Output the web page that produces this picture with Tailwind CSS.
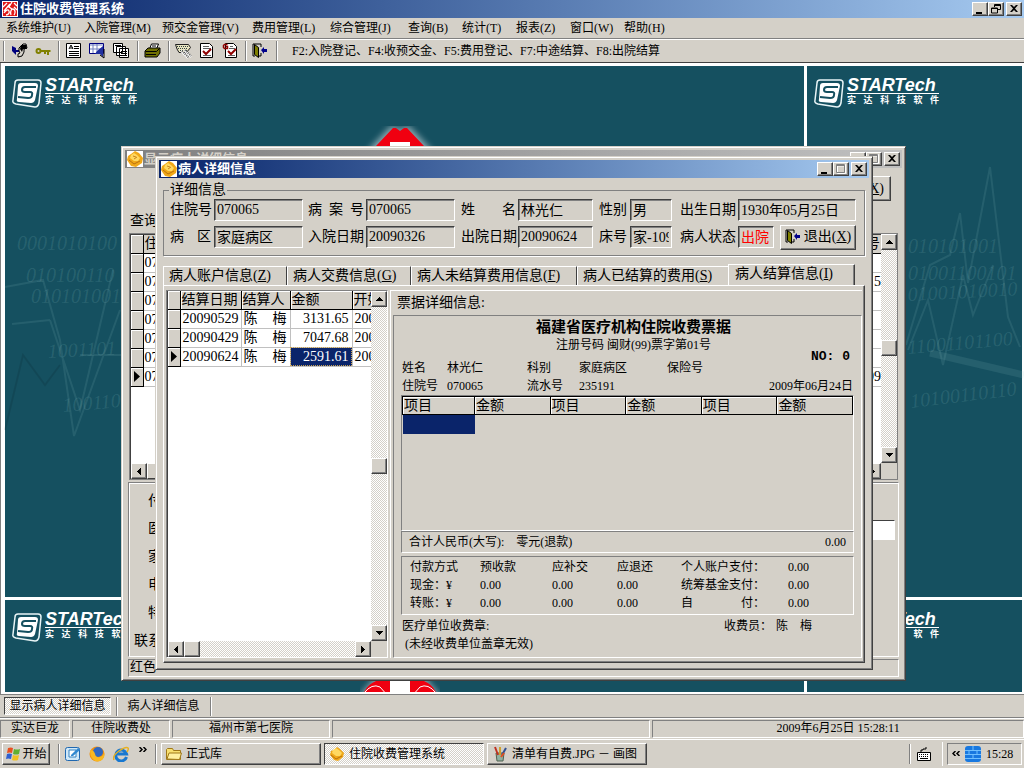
<!DOCTYPE html>
<html lang="zh-CN">
<head>
  <meta charset="UTF-8" />
  <meta name="viewport" content="width=device-width, initial-scale=1.0" />
  <title>住院收费管理系统</title>
  <script src="https://cdn.jsdelivr.net/npm/@tailwindcss/browser@4"></script>
</head>
<body class="h-screen flex flex-col overflow-hidden bg-[#d4d0c8] text-black text-[12px] leading-[16px] whitespace-nowrap font-['Liberation_Serif','Noto_Sans_CJK_SC',sans-serif]">

  <!-- Общие символы -->
  <svg class="hidden">
    <symbol id="i-up" viewBox="0 0 7 4"><path d="M3 0h1v1h1v1h1v1h1v1H0V3h1V2h1V1h1z" /></symbol>
    <symbol id="i-down" viewBox="0 0 7 4"><path d="M0 0h7v1H6v1H5v1H4v1H3V3H2V2H1V1H0z" /></symbol>
    <symbol id="i-left" viewBox="0 0 4 7"><path d="M4 0v7H3V6H2V5H1V4H0V3h1V2h1V1h1V0z" /></symbol>
    <symbol id="i-right" viewBox="0 0 4 7"><path d="M0 0h1v1h1v1h1v1h1v1H3v1H2v1H1v1H0z" /></symbol>
    <symbol id="i-min" viewBox="0 0 12 10"><path d="M2 8h6v2H2z" /></symbol>
    <symbol id="i-max" viewBox="0 0 12 10"><path d="M2.500 1v8.500h8V.5h-8M2 2h9" fill="none" stroke="#fff" /><path d="M1.500 .5h8v8h-8zM1 1.500h9" fill="none" stroke="#808080" /></symbol>
    <symbol id="i-close" viewBox="0 0 12 10"><path d="M2 1h2l2 2 2-2h2L7 4.500 10 8H8L6 6 4 8H2l3-3.500z" /></symbol>
    <symbol id="i-restore" viewBox="0 0 12 10"><path d="M4.500 3V.5h6v5H8M4 1.500h7M1.500 4h6v5h-6zM1 4.500h7" fill="none" stroke="#000" /></symbol>
    <symbol id="i-win" viewBox="0 0 16 16">
      <path d="M0 0h16v16H0z" fill="#fff" />
      <path d="M8 0l4 2 4 5-1 5-6 4-5-1-4-6 1-4 3-2z" fill="#f0a818" />
      <path d="M7 2l3 2 3 3-2 3-4 0-4-3 1-3z" fill="#ffd860" />
      <path d="M2 9l5 4 6-3" fill="none" stroke="#b87010" /><path d="M6 5l3 1M7 8l3-2" stroke="#c88420" />
    </symbol>
    <symbol id="i-door" viewBox="0 0 16 16">
      <path d="M1 13V1h8v3M9 10v3H7M1 13h2" fill="none" stroke="#000" />
      <path d="M2.500 1.500l4 3v10l-4-3z" fill="#808000" stroke="#000" />
      <path d="M9 7l3-3v2h3v3h-3v2z" fill="#00008b" />
    </symbol>
    <symbol id="i-s" viewBox="0 0 32 30">
      <path d="M7 2h20q3 0 3 3l-2 20q-1 4-4 4L5 26q-4-1-3-4L4 5q0-3 3-3z" fill="none" stroke="#e8f4f6" stroke-width="1.500" />
      <path d="M10 5h14q3 0 3 3l-3 14q-1 3-4 3L8 24q-3 0-2-3L7 8q0-3 3-3z" fill="#fff" />
      <path d="M25 9H14q-3 0-3 3 0 2 3 2h5q3 0 2 3 0 3-4 3l-10-1" fill="none" stroke="#155060" stroke-width="2" />
    </symbol>
    <symbol id="i-cross" viewBox="0 0 80 70">
      <path d="M32 1l8 4 8-4 18 19 12 14v36H2V34l12-14z" fill="#fff" opacity=".5" stroke="#fff" stroke-width="3" stroke-linejoin="round" class="blur-[3px]" />
      <path d="M33 2h3l4 3 4-3h3l17 18H16z" fill="#f00010" />
      <path d="M16 20h48q10 4 13 14l1 36H2l1-36q3-10 13-14z" fill="#f00010" />
      <path d="M30 16h20v20h20v20H10V36h20z" fill="#fff" /><path d="M4 32q8-10 16-6l8 9M76 32q-8-10-16-6l-8 9" fill="none" stroke="#fff" />
    </symbol>
  </svg>

  <!-- Заголовок программы -->
  <header class="h-[18px] shrink-0 flex items-center pl-[2px] pr-[2px] bg-linear-to-r from-[#0a246a] to-[#a6caf0]">
    <svg class="size-4" viewBox="0 0 16 16">
      <path d="M0 0h16v16H0z" fill="#fff" /><path d="M1 1h14v14H1z" fill="#e01818" />
      <path d="M1 6l4-4M2 10l6-7M10 1l-3 5 3 2M12 2l3 3M2 12c2-3 4-4 5-2s-1 4-3 4M9 14c-1-3 0-6 2-6s3 4 1 6M12 6l3 3" fill="none" stroke="#fff" stroke-width="1.300" />
    </svg>
    <h1 class="ml-[2px] flex-1 text-white font-bold text-[13px]">住院收费管理系统</h1>
    <button aria-label="最小化" class="w-4 h-[14px] p-px bg-[#d4d0c8] border border-white border-r-[#404040] border-b-[#404040] shadow-[inset_-1px_-1px_0_#808080]"><svg class="w-3 h-[10px]"><use href="#i-min" /></svg></button>
    <button aria-label="还原" class="w-4 h-[14px] p-px bg-[#d4d0c8] border border-white border-r-[#404040] border-b-[#404040] shadow-[inset_-1px_-1px_0_#808080]"><svg class="w-3 h-[10px]"><use href="#i-restore" /></svg></button>
    <button aria-label="关闭" class="ml-[2px] w-4 h-[14px] p-px bg-[#d4d0c8] border border-white border-r-[#404040] border-b-[#404040] shadow-[inset_-1px_-1px_0_#808080]"><svg class="w-3 h-[10px]"><use href="#i-close" /></svg></button>
  </header>

  <!-- Меню -->
  <nav class="h-[21px] shrink-0 flex items-center pl-[6px] pb-px border-b border-[#808080]">
    <button class="w-[78px] text-left">系统维护(U)</button>
    <button class="w-[78px] text-left">入院管理(M)</button>
    <button class="w-[90px] text-left">预交金管理(V)</button>
    <button class="w-[78px] text-left">费用管理(L)</button>
    <button class="w-[78px] text-left">综合管理(J)</button>
    <button class="w-[54px] text-left">查询(B)</button>
    <button class="w-[54px] text-left">统计(T)</button>
    <button class="w-[54px] text-left">报表(Z)</button>
    <button class="w-[54px] text-left">窗口(W)</button>
    <button class="w-[54px] text-left">帮助(H)</button>
  </nav>

  <!-- Панель инструментов -->
  <div class="h-[23px] shrink-0 flex items-center pl-[3px] border-t border-white">
    <span class="w-px h-5 mr-[7px] bg-[#808080] shadow-[1px_0_0_#fff]"></span>
    <button aria-label="登录" class="mr-[7px]"><svg class="w-[17px] h-4" viewBox="0 0 17 16"><path d="M1 3v5l4 4v-3h3V7H5V5z" fill="#00007f" /><path d="M8 5l4-4h3l1 4-3 1v3l-2 4-4 1v-3l2-1-1-2z" fill="#d8d4cc" stroke="#000" /><path d="M10 2h5l1 4h-4l-1 3-2-3z" /></svg></button>
    <button aria-label="密码" class="mr-[7px]"><svg class="w-4 h-4" viewBox="0 0 16 16"><circle cx="3.500" cy="8" r="2" fill="none" stroke="#808000" stroke-width="2" /><path d="M6 8h9.500M10 8v3M13 8v4" stroke="#808000" stroke-width="2" /></svg></button>
    <span class="w-px h-5 mr-[7px] bg-[#808080] shadow-[1px_0_0_#fff]"></span>
    <button aria-label="登记" class="mr-[7px]"><svg class="size-4" viewBox="0 0 16 16"><path d="M.5 .5h14v14H.5z" fill="#fff" stroke="#000" /><path d="M3 6l2-4 2 4M4 5h3M8 3.500h5M8 5.500h5M3 8.500h10M3 10.500h10M3 12.500h10" fill="none" stroke="#000" /></svg></button>
    <button aria-label="查找" class="mr-[8px]"><svg class="size-4" viewBox="0 0 16 16"><path d="M.5 .5h14v10H.5z" fill="#fff" stroke="#00007f" /><path d="M1 2h13M4 1v9M8 1v9M1 6h13" stroke="#7080c0" /><path d="M8 8l6-5v11l-3-3H6z" fill="#2030a0" /><path d="M11 12l4 3V6" fill="none" stroke="#000" /></svg></button>
    <button aria-label="复制" class="mr-[8px]"><svg class="size-4" viewBox="0 0 16 16"><path d="M.5 .5h9v9h-9zM3.500 3.500h9v9h-9zM6.500 5.500h9v9h-9z" fill="#fff" stroke="#000" /><path d="M8 8.500h6M8 10.500h6M8 12.500h6M2 2.500h6" stroke="#000" /></svg></button>
    <span class="w-px h-5 mr-[6px] bg-[#808080] shadow-[1px_0_0_#fff]"></span>
    <button aria-label="打印" class="mr-[7px]"><svg class="w-[17px] h-4" viewBox="0 0 17 16"><path d="M5.500 6l2-5h7l-2 5z" fill="#fff" stroke="#000" /><path d="M1 8l3-3h12v5l-3 4H1z" fill="#707000" stroke="#000" /><path d="M1.500 8.500h11l3-3M2 11.500h10" fill="none" stroke="#000" /><path d="M8 3h4" stroke="#000" /></svg></button>
    <span class="w-px h-5 mr-[6px] bg-[#808080] shadow-[1px_0_0_#fff]"></span>
    <button aria-label="收费" class="mr-[7px]"><svg class="w-[17px] h-4" viewBox="0 0 17 16"><path d="M.5 1.500h13l2 3-4 5H4L2 6z" fill="#e8e4c0" stroke="#202020" /><path d="M2 3.500h12M3 5.500h10M5 7.500h8" stroke="#304040" stroke-dasharray="1 1" /><path d="M6 8l7 7M9 7l7 7" stroke="#fff" stroke-width="2" /><path d="M7 8l7 7M10 7l6 6" stroke="#606060" stroke-width="2" stroke-dasharray="1 1" /></svg></button>
    <button aria-label="结算" class="mr-[7px]"><svg class="size-4" viewBox="0 0 16 16"><path d="M1.500 .5h9l3 3v11h-12z" fill="#fff" stroke="#000" /><path d="M4 3.500h6M4 5.500h8M4 12.500h8" stroke="#606060" /><path d="M4 8l3 3 5-5" fill="none" stroke="#900000" stroke-width="2" /></svg></button>
    <button aria-label="出院结算" class="mr-[7px]"><svg class="size-4" viewBox="0 0 16 16"><path d="M3.500 .5h8l3 3v11h-11z" fill="#fff" stroke="#000" /><path d="M8 3.500h3M7 5.500h6M6 12.500h7" stroke="#606060" /><path d="M6 8l3 3 5-5" fill="none" stroke="#900000" stroke-width="2" /><path d="M5.500 1.500h-3l-1 1v2l1 1h3v-2h-2" fill="none" stroke="#900000" stroke-width="1.500" /></svg></button>
    <span class="w-px h-5 mr-[6px] bg-[#808080] shadow-[1px_0_0_#fff]"></span>
    <button aria-label="退出系统" class="mr-[8px]"><svg class="size-4"><use href="#i-door" /></svg></button>
    <span class="w-px h-5 mr-[15px] bg-[#808080] shadow-[1px_0_0_#fff]"></span>
    <span>F2:入院登记、F4:收预交金、F5:费用登记、F7:中途结算、F8:出院结算</span>
  </div>

  <!-- Рабочая область -->
  <main class="relative flex-1 min-h-0 overflow-hidden border-t border-[#404040] bg-white">
    <div class="h-full grid grid-cols-[799fr_215fr] grid-rows-[531px_1fr] gap-[3px] pt-[3px] pl-1 pr-[2px] pb-[2px] border-l border-[#808080] text-white">
      <div class="bg-[#155060] pl-[6px] pt-3 flex items-start gap-[2px]">
        <svg class="w-8 h-[30px]"><use href="#i-s" /></svg>
        <div class="w-[92px] font-['Liberation_Sans','Noto_Sans_CJK_SC',sans-serif]"><div class="text-[18px] leading-[15px] font-bold italic border-b border-white">STARTech</div><div class="flex justify-between text-[9px] leading-[12px] font-bold"><span>实</span><span>达</span><span>科</span><span>技</span><span>软</span><span>件</span></div></div>
      </div>
      <div class="bg-[#155060] pl-[6px] pt-3 flex items-start gap-[2px]">
        <svg class="w-8 h-[30px]"><use href="#i-s" /></svg>
        <div class="w-[92px] font-['Liberation_Sans','Noto_Sans_CJK_SC',sans-serif]"><div class="text-[18px] leading-[15px] font-bold italic border-b border-white">STARTech</div><div class="flex justify-between text-[9px] leading-[12px] font-bold"><span>实</span><span>达</span><span>科</span><span>技</span><span>软</span><span>件</span></div></div>
      </div>
      <div class="bg-[#155060] pl-[6px] pt-3 flex items-start gap-[2px]">
        <svg class="w-8 h-[30px]"><use href="#i-s" /></svg>
        <div class="w-[92px] font-['Liberation_Sans','Noto_Sans_CJK_SC',sans-serif]"><div class="text-[18px] leading-[15px] font-bold italic border-b border-white">STARTech</div><div class="flex justify-between text-[9px] leading-[12px] font-bold"><span>实</span><span>达</span><span>科</span><span>技</span><span>软</span><span>件</span></div></div>
      </div>
      <div class="bg-[#155060] pl-[6px] pt-3 flex items-start gap-[2px]">
        <svg class="w-8 h-[30px]"><use href="#i-s" /></svg>
        <div class="w-[92px] font-['Liberation_Sans','Noto_Sans_CJK_SC',sans-serif]"><div class="text-[18px] leading-[15px] font-bold italic border-b border-white">STARTech</div><div class="flex justify-between text-[9px] leading-[12px] font-bold"><span>实</span><span>达</span><span>科</span><span>技</span><span>软</span><span>件</span></div></div>
      </div>
    </div>

    <!-- Рисунок обоев -->
    <svg class="absolute left-0 top-0 w-[1024px] h-[629px]" viewBox="0 63 1024 629">
      <use href="#i-cross" x="360" y="126" width="80" height="70" />
      <use href="#i-cross" x="360" y="661" width="80" height="70" />
      <g fill="none" stroke="#9fd0d0" stroke-opacity=".12" stroke-width="2">
        <path d="M5 287l38-7 17 60 14 96 46-126M12 324l38-4M50 320l30 90 33-140M80 355h42" />
        <path d="M5 430l18-75 22 30 15-20" stroke="#000" stroke-opacity=".1" />
        <path d="M906 345l24-80 20-10 10-42 8 70 22-116 18 150 12 30M908 350l20-50 15 65 20-90 10 40 20-50" />
        <path d="M930 353l94 22" stroke-width="7" />
      </g>
      <g fill="#9fd0d0" fill-opacity=".15" font-size="20" font-style="italic" font-family="Liberation Serif">
        <text x="17" y="250">0001010100</text>
        <text x="26" y="282">010100110</text>
        <text x="31" y="303">010101001</text>
        <text x="48" y="358" transform="rotate(-3 48 358)">1001101</text>
        <text x="63" y="412" transform="rotate(-5 63 412)">100110</text>
        <text x="908" y="253">010101001</text>
        <text x="908" y="280">01001100101</text>
        <text x="908" y="301" transform="rotate(-3 908 301)">01001010010</text>
        <text x="908" y="354" transform="rotate(-5 908 354)">11001101100</text>
        <text x="911" y="408" transform="rotate(-7 911 408)">10100110110</text>
      </g>
    </svg>

    <!-- Заднее окно -->
    <section class="absolute left-[121px] top-[83px] w-[785px] h-[535px] p-[2px] flex flex-col bg-[#d4d0c8] border border-[#d4d0c8] border-r-[#404040] border-b-[#404040] shadow-[inset_1px_1px_0_#fff,inset_-1px_-1px_0_#808080]">
      <div class="h-[18px] mx-px mt-px shrink-0 flex items-center px-[2px] bg-linear-to-r from-[#808080] to-[#c0c0c0]">
        <svg class="size-4"><use href="#i-win" /></svg>
        <h2 class="flex-1 pl-px text-[#d4d0c8] font-bold text-[13px]">显示病人详细信息</h2>
        <button aria-label="最小化" class="w-4 h-[14px] p-px bg-[#d4d0c8] border border-white border-r-[#404040] border-b-[#404040] shadow-[inset_-1px_-1px_0_#808080]"><svg class="w-3 h-[10px]"><use href="#i-min" /></svg></button>
        <button aria-label="最大化" class="w-4 h-[14px] p-px bg-[#d4d0c8] border border-white border-r-[#404040] border-b-[#404040] shadow-[inset_-1px_-1px_0_#808080]"><svg class="w-3 h-[10px]"><use href="#i-max" /></svg></button>
        <button aria-label="关闭" class="ml-[2px] w-4 h-[14px] p-px bg-[#d4d0c8] border border-white border-r-[#404040] border-b-[#404040] shadow-[inset_-1px_-1px_0_#808080]"><svg class="w-3 h-[10px]"><use href="#i-close" /></svg></button>
      </div>
      <div class="flex justify-end pt-2 pr-3">
        <button class="w-[76px] h-[25px] pr-[6px] text-right text-[14px] border border-white border-r-[#404040] border-b-[#404040] shadow-[inset_-1px_-1px_0_#808080]">退出(<u>X</u>)</button>
      </div>
      <div class="pl-[6px] pt-3 text-[14px] leading-[16px]">查询</div>
      <div class="mx-[5px] mt-1 h-[247px] flex bg-white border border-[#808080] shadow-[inset_1px_1px_0_#404040]">
        <div class="flex-1 flex flex-col min-w-0 pl-px pt-px">
          <div class="flex-1">
            <table class="w-full border-collapse text-[14px] leading-[16px]">
              <thead>
                <tr class="h-[18px] bg-[#d4d0c8]"><th class="w-3 p-0 border-r border-b border-black shadow-[inset_1px_1px_0_#fff]"></th><th class="p-0 pl-px text-left font-normal border-b border-black">住院号</th><th class="p-0 pr-px text-right font-normal border-b border-black">号</th></tr>
              </thead>
              <tbody id="patients"></tbody>
            </table>
          </div>
          <div class="h-4 flex justify-between bg-[#e9e7e3]">
            <div class="flex">
              <button aria-label="向左" class="size-4 flex items-center justify-center bg-[#d4d0c8] border border-white border-r-[#404040] border-b-[#404040] shadow-[inset_-1px_-1px_0_#808080]"><svg class="w-1 h-[7px]"><use href="#i-left" /></svg></button>
              <span class="w-5 bg-[#d4d0c8] border border-white border-r-[#404040] border-b-[#404040]"></span>
            </div>
            <button aria-label="向右" class="size-4 flex items-center justify-center bg-[#d4d0c8] border border-white border-r-[#404040] border-b-[#404040] shadow-[inset_-1px_-1px_0_#808080]"><svg class="w-1 h-[7px]"><use href="#i-right" /></svg></button>
          </div>
        </div>
        <div class="w-4 flex flex-col bg-[#d4d0c8]">
          <div class="h-[229px] flex flex-col bg-[repeating-conic-gradient(#fff_0_25%,#d4d0c8_0_50%)] bg-[length:2px_2px]">
            <button aria-label="向上" class="size-4 flex items-center justify-center bg-[#d4d0c8] border border-white border-r-[#404040] border-b-[#404040] shadow-[inset_-1px_-1px_0_#808080]"><svg class="w-[7px] h-1"><use href="#i-up" /></svg></button>
            <span class="mt-[90px] mb-auto size-4 bg-[#d4d0c8] border border-white border-r-[#404040] border-b-[#404040] shadow-[inset_-1px_-1px_0_#808080]"></span>
            <button aria-label="向下" class="size-4 flex items-center justify-center bg-[#d4d0c8] border border-white border-r-[#404040] border-b-[#404040] shadow-[inset_-1px_-1px_0_#808080]"><svg class="w-[7px] h-1"><use href="#i-down" /></svg></button>
          </div>
        </div>
      </div>
      <div class="mx-1 mt-[2px] h-[175px] flex justify-between border border-[#808080] border-r-white border-b-white text-[14px] shadow-[inset_1px_1px_0_#fff]">
        <div class="w-[26px] pt-1 pl-[5px] flex flex-col leading-[28px] [&>span]:h-[28px]">
          <span class="pl-[14px]">付</span><span class="pl-[14px]">医</span><span class="pl-[14px]">家</span><span class="pl-[14px]">电</span><span class="pl-[14px]">特</span><span>联系</span>
        </div>
        <input aria-label="电话" class="w-[90px] h-[20px] mt-[37px] mr-[3px] bg-white border border-white border-t-[#404040] border-l-[#404040]" />
      </div>
      <div class="mx-1 mt-[2px] h-[18px] border border-[#808080] border-r-white border-b-white text-[13px] leading-[13px] pl-px">红色</div>
    </section>

    <!-- Окно пациента -->
    <section class="absolute left-[155px] top-[93px] w-[718px] h-[514px] p-[3px] flex flex-col bg-[#d4d0c8] border border-[#d4d0c8] border-r-[#404040] border-b-[#404040] shadow-[inset_1px_1px_0_#fff,inset_-1px_-1px_0_#808080]">
      <div class="h-[18px] shrink-0 flex items-center px-[2px] bg-linear-to-r from-[#0a246a] to-[#a6caf0]">
        <svg class="size-4"><use href="#i-win" /></svg>
        <h2 class="flex-1 pl-px text-white font-bold text-[13px]">病人详细信息</h2>
        <button aria-label="最小化" class="w-4 h-[14px] p-px bg-[#d4d0c8] border border-white border-r-[#404040] border-b-[#404040] shadow-[inset_-1px_-1px_0_#808080]"><svg class="w-3 h-[10px]"><use href="#i-min" /></svg></button>
        <button aria-label="最大化" class="w-4 h-[14px] p-px bg-[#d4d0c8] border border-white border-r-[#404040] border-b-[#404040] shadow-[inset_-1px_-1px_0_#808080]"><svg class="w-3 h-[10px]"><use href="#i-max" /></svg></button>
        <button aria-label="关闭" class="ml-[2px] w-4 h-[14px] p-px bg-[#d4d0c8] border border-white border-r-[#404040] border-b-[#404040] shadow-[inset_-1px_-1px_0_#808080]"><svg class="w-3 h-[10px]"><use href="#i-close" /></svg></button>
      </div>

      <fieldset class="mx-1 mt-1 h-[74px] shrink-0 pl-[6px] border border-[#808080] shadow-[1px_1px_0_#fff,inset_0_-1px_0_#d4d0c8] text-[14px] leading-[16px]">
        <legend class="-ml-px px-px bg-[#d4d0c8]">详细信息</legend>
        <div class="mt-px grid grid-cols-[44px_94px_58px_95px_57px_81px_31px_50px_58px_118px] auto-rows-[22px] gap-y-[5px] items-center">
          <label for="hospNo">住院号</label>
          <input id="hospNo" value="070065" class="w-[89px] h-[22px] px-[2px] border border-white border-t-[#404040] border-l-[#404040] shadow-[inset_1px_1px_0_#808080]" />
          <label for="caseNo" class="flex justify-between pr-[2px]"><span>病</span><span>案</span><span>号</span></label>
          <input id="caseNo" value="070065" class="w-[89px] h-[22px] px-[2px] border border-white border-t-[#404040] border-l-[#404040] shadow-[inset_1px_1px_0_#808080]" />
          <label for="name" class="flex justify-between pr-[2px]"><span>姓</span><span>名</span></label>
          <input id="name" value="林光仁" class="w-[75px] h-[22px] px-[2px] pb-[3px] border border-white border-t-[#404040] border-l-[#404040] shadow-[inset_1px_1px_0_#808080]" />
          <label for="sex">性别</label>
          <input id="sex" value="男" class="w-[42px] h-[22px] px-[2px] pb-[3px] border border-white border-t-[#404040] border-l-[#404040] shadow-[inset_1px_1px_0_#808080]" />
          <label for="birth">出生日期</label>
          <input id="birth" value="1930年05月25日" class="w-[118px] h-[22px] px-[2px] pb-[3px] border border-white border-t-[#404040] border-l-[#404040] shadow-[inset_1px_1px_0_#808080]" />
          <label for="ward" class="flex justify-between pr-[3px]"><span>病</span><span>区</span></label>
          <input id="ward" value="家庭病区" class="w-[89px] h-[22px] px-[2px] pb-[3px] border border-white border-t-[#404040] border-l-[#404040] shadow-[inset_1px_1px_0_#808080]" />
          <label for="inDate">入院日期</label>
          <input id="inDate" value="20090326" class="w-[89px] h-[22px] px-[2px] border border-white border-t-[#404040] border-l-[#404040] shadow-[inset_1px_1px_0_#808080]" />
          <label for="outDate">出院日期</label>
          <input id="outDate" value="20090624" class="w-[75px] h-[22px] px-[2px] border border-white border-t-[#404040] border-l-[#404040] shadow-[inset_1px_1px_0_#808080]" />
          <label for="bed">床号</label>
          <input id="bed" value="家-109" class="w-[42px] h-[22px] px-[2px] pb-[3px] border border-white border-t-[#404040] border-l-[#404040] shadow-[inset_1px_1px_0_#808080]" />
          <label for="state">病人状态</label>
          <div class="flex items-center justify-between">
            <input id="state" value="出院" class="w-[36px] h-[22px] px-[2px] pb-[3px] text-[#ff0000] border border-white border-t-[#404040] border-l-[#404040] shadow-[inset_1px_1px_0_#808080]" />
            <button class="w-[76px] h-[25px] flex items-center justify-center gap-[3px] border border-white border-r-[#404040] border-b-[#404040] shadow-[inset_-1px_-1px_0_#808080]"><svg class="size-4"><use href="#i-door" /></svg><span>退出(<u>X</u>)</span></button>
          </div>
        </div>
      </fieldset>

      <!-- Вкладки -->
      <div class="mt-2 mx-1 flex items-end shrink-0 text-[14px] leading-[16px]">
        <button class="w-[124px] h-[19px] pl-[5px] text-left border-t border-l border-white border-r border-r-[#404040]">病人账户信息(<u>Z</u>)</button>
        <button class="w-[124px] h-[19px] pl-[5px] text-left border-t border-l border-white border-r border-r-[#404040]">病人交费信息(<u>G</u>)</button>
        <button class="w-[166px] h-[19px] pl-[5px] text-left border-t border-l border-white border-r border-r-[#404040]">病人未结算费用信息(<u>F</u>)</button>
        <button class="w-[151px] h-[19px] pl-[5px] text-left border-t border-l border-white">病人已结算的费用(<u>S</u>)</button>
        <button class="w-[127px] h-[21px] pl-[6px] pb-[2px] text-left border-t border-l border-white border-r border-r-[#404040] shadow-[inset_-1px_0_0_#808080]">病人结算信息(<u>I</u>)</button>
      </div>
      <div class="flex-1 min-h-0 mx-1 mb-[3px] flex gap-[2px] pl-[2px] pt-1 pr-[2px] pb-1 border border-white border-r-[#404040] border-b-[#404040] shadow-[inset_-1px_-1px_0_#808080]">

        <!-- Список расчётов -->
        <div class="w-[222px] flex border border-[#808080] border-r-white border-b-white">
          <div class="flex-1 min-w-0 flex flex-col border-l border-[#404040]">
            <div class="flex-1 overflow-hidden bg-white">
              <table class="w-[240px] table-fixed border-collapse text-[14px] leading-[17px]">
                <colgroup><col class="w-3" /><col class="w-[61px]" /><col class="w-[49px]" /><col class="w-[62px]" /><col class="w-[56px]" /></colgroup>
                <thead>
                  <tr class="h-[18px] bg-[#d4d0c8] text-left [&>th]:p-0 [&>th]:pl-px [&>th]:font-normal [&>th]:border-r [&>th]:border-b [&>th]:border-black [&>th]:shadow-[inset_1px_1px_0_#fff]"><th></th><th>结算日期</th><th>结算人</th><th>金额</th><th>开始日期</th></tr>
                </thead>
                <tbody id="bills"></tbody>
              </table>
            </div>
            <div class="h-4 flex bg-[repeating-conic-gradient(#fff_0_25%,#d4d0c8_0_50%)] bg-[length:2px_2px]">
              <button aria-label="向左" class="size-4 flex items-center justify-center bg-[#d4d0c8] border border-white border-r-[#404040] border-b-[#404040] shadow-[inset_-1px_-1px_0_#808080]"><svg class="w-1 h-[7px]"><use href="#i-left" /></svg></button>
              <span class="mr-auto size-4 bg-[#d4d0c8] border border-white border-r-[#404040] border-b-[#404040] shadow-[inset_-1px_-1px_0_#808080]"></span>
              <button aria-label="向右" class="size-4 flex items-center justify-center bg-[#d4d0c8] border border-white border-r-[#404040] border-b-[#404040] shadow-[inset_-1px_-1px_0_#808080]"><svg class="w-1 h-[7px]"><use href="#i-right" /></svg></button>
            </div>
          </div>
          <div class="w-4 pb-4 flex flex-col">
            <div class="flex-1 flex flex-col bg-[repeating-conic-gradient(#fff_0_25%,#d4d0c8_0_50%)] bg-[length:2px_2px]">
              <button aria-label="向上" class="size-4 flex items-center justify-center bg-[#d4d0c8] border border-white border-r-[#404040] border-b-[#404040] shadow-[inset_-1px_-1px_0_#808080]"><svg class="w-[7px] h-1"><use href="#i-up" /></svg></button>
              <span class="my-auto size-4 bg-[#d4d0c8] border border-white border-r-[#404040] border-b-[#404040] shadow-[inset_-1px_-1px_0_#808080]"></span>
              <button aria-label="向下" class="size-4 flex items-center justify-center bg-[#d4d0c8] border border-white border-r-[#404040] border-b-[#404040] shadow-[inset_-1px_-1px_0_#808080]"><svg class="w-[7px] h-1"><use href="#i-down" /></svg></button>
            </div>
          </div>
        </div>

        <!-- Квитанция -->
        <div class="flex-1 min-w-0 flex flex-col pl-[2px] pt-1 border-l border-t border-white">
          <h3 class="pl-1 text-[14px] leading-[16px]">票据详细信息:</h3>
          <div class="mt-1 flex-1 flex flex-col px-[7px] pt-[3px] border border-[#808080] border-r-white border-b-white">
            <h4 class="text-center text-[15px] leading-[16px] font-bold pl-3">福建省医疗机构住院收费票据</h4>
            <div class="mt-[3px] text-center leading-[14px] pl-3">注册号码 闽财(99)票字第01号</div>
            <div class="h-[7px] pr-1 text-right text-[13px] leading-[10px] font-bold font-['Liberation_Mono',monospace]">NO: 0</div>
            <div class="pl-px grid grid-cols-[45px_80px_52px_88px_36px_1fr] leading-[18px]">
              <span>姓名</span><span>林光仁</span><span>科别</span><span>家庭病区</span><span>保险号</span><span></span>
              <span>住院号</span><span>070065</span><span>流水号</span><span>235191</span><span></span><span class="text-right pr-px">2009年06月24日</span>
            </div>
            <div class="h-[136px] border border-[#808080] border-r-white border-b-white">
              <table class="w-full table-fixed border-collapse text-[14px] leading-[17px]">
                <colgroup><col class="w-[72px]" /><col span="5" /></colgroup>
                <thead>
                  <tr class="h-[18px] text-left [&>th]:p-0 [&>th]:pl-px [&>th]:font-normal [&>th]:border [&>th]:border-black [&>th]:shadow-[inset_1px_1px_0_#fff]"><th>项目</th><th>金额</th><th>项目</th><th>金额</th><th>项目</th><th>金额</th></tr>
                </thead>
                <tbody>
                  <tr class="h-[19px]"><td class="bg-[#0a246a]"></td><td></td><td></td><td></td><td></td><td></td></tr>
                </tbody>
              </table>
            </div>
            <div class="h-[22px] px-[7px] flex justify-between leading-[20px] border border-[#808080] border-r-white border-b-white">
              <span class="flex gap-3"><span>合计人民币(大写):</span><span>零元(退款)</span></span><span>0.00</span>
            </div>
            <div class="mt-[3px] h-[59px] pl-2 pt-px grid grid-cols-[70px_72px_65px_64px_107px_1fr] auto-rows-[18px] leading-[18px] border border-[#808080] border-r-white border-b-white">
              <span>付款方式</span><span>预收款</span><span>应补交</span><span>应退还</span><span>个人账户支付：</span><span>0.00</span>
              <span>现金：¥</span><span>0.00</span><span>0.00</span><span>0.00</span><span>统筹基金支付：</span><span>0.00</span>
              <span>转账：¥</span><span>0.00</span><span>0.00</span><span>0.00</span><span class="w-[84px] flex justify-between"><span>自</span><span>付：</span></span><span>0.00</span>
            </div>
            <div class="mt-[2px] pl-px pr-[42px] flex justify-between leading-[18px]"><span>医疗单位收费章:</span><span class="flex"><span>收费员：</span><span class="w-9 ml-1 flex justify-between"><span>陈</span><span>梅</span></span></span></div>
            <div class="pl-1 leading-[18px]">(未经收费单位盖章无效)</div>
          </div>
        </div>
      </div>
    </section>
  </main>

  <!-- Открытые окна -->
  <div class="h-[23px] shrink-0 flex items-center pl-1 border-t border-[#808080]">
    <button class="w-[107px] h-[18px] border border-[#404040] border-r-white border-b-white bg-[repeating-conic-gradient(#fff_0_25%,#d4d0c8_0_50%)] bg-[length:2px_2px]">显示病人详细信息</button>
    <span class="w-px h-[19px] ml-[5px] bg-[#808080] shadow-[1px_0_0_#fff]"></span>
    <button class="w-[94px] h-[19px] border-r border-[#808080] shadow-[1px_0_0_#fff]">病人详细信息</button>
  </div>

  <!-- Строка состояния -->
  <footer class="h-[22px] shrink-0 flex gap-[2px] pt-[2px] pb-px border-t border-[#808080] shadow-[inset_0_1px_0_#fff] text-center leading-[15px]">
    <div class="w-[70px] border border-[#808080] border-r-white border-b-white">实达巨龙</div>
    <div class="w-[98px] border border-[#808080] border-r-white border-b-white">住院收费处</div>
    <div class="w-[158px] border border-[#808080] border-r-white border-b-white">福州市第七医院</div>
    <div class="flex-[318] border border-[#808080] border-r-white border-b-white"></div>
    <div class="flex-[372] border border-[#808080] border-r-white border-b-white">2009年6月25日 15:28:11</div>
  </footer>

  <!-- Панель задач -->
  <div class="h-[29px] shrink-0 flex items-center pl-[2px] pr-[2px] pb-px border-t border-white">
    <button class="w-12 h-[22px] flex items-center justify-center gap-px border border-white border-r-[#404040] border-b-[#404040] shadow-[inset_-1px_-1px_0_#808080]">
      <svg class="w-4 h-[14px]" viewBox="0 0 16 14"><path d="M3 1q3-1 5 0L7 6q-2-1-5 0z" fill="#e85020" /><path d="M9 2q3 1 6 0l-1 5q-3 1-6 0z" fill="#60b030" /><path d="M2 7q2-1 5 0l-1 5q-3-1-5 0z" fill="#3060d0" /><path d="M8 8q3 1 6 0l-1 5q-3 1-6 0z" fill="#f0c020" /></svg>
      <span>开始</span>
    </button>
    <span class="w-px h-5 ml-2 bg-[#808080] shadow-[1px_0_0_#fff]"></span>
    <button aria-label="显示桌面" class="ml-[6px]"><svg class="size-4" viewBox="0 0 16 16"><rect x=".5" y="1.500" width="14" height="13" rx="2" fill="#d0e8f8" stroke="#2068b0" /><path d="M4 4h7v7H4z" fill="#fff" stroke="#3080c0" /><path d="M6 9l7-7 2 2-7 6H6z" fill="#3088d0" /></svg></button>
    <button aria-label="火狐" class="ml-2"><svg class="size-4" viewBox="0 0 16 16"><circle cx="8" cy="8" r="7.500" fill="#f09010" /><circle cx="9" cy="6" r="5" fill="#3068c0" /><path d="M1 4q4 0 5 4t5 3q4-1 4-5 2 8-6 9.500Q1 15 1 4z" fill="#f8b820" /></svg></button>
    <button aria-label="浏览器" class="ml-2"><svg class="size-4" viewBox="0 0 16 16"><path d="M13.500 11A5.500 5.500 0 1 1 13.500 8H4" fill="none" stroke="#1878d0" stroke-width="3" /><path d="M1 14Q-1 10 6 5t9-3q1 1-1 4" fill="none" stroke="#e8b020" stroke-width="1.500" /></svg></button>
    <button aria-label="更多" class="ml-[10px] mb-2"><svg class="w-2 h-[5px]" viewBox="0 0 8 5"><path d="M.5 0l2.500 2.500L.5 5M4.500 0l2.500 2.500L4.500 5" fill="none" stroke="#000" stroke-width="1.500" /></svg></button>
    <span class="w-px h-5 ml-2 bg-[#808080] shadow-[1px_0_0_#fff]"></span>
    <button class="ml-[5px] w-40 h-[22px] pl-1 flex items-center gap-1 border border-white border-r-[#404040] border-b-[#404040] shadow-[inset_-1px_-1px_0_#808080]">
      <svg class="size-4" viewBox="0 0 16 16"><path d="M.5 13.500v-10l1-1h5l1 2h7v9z" fill="#f8e070" stroke="#a07818" /><path d="M1 13l2-6h12.500l-2 6.500z" fill="#fff0a0" stroke="#a07818" /></svg>正式库
    </button>
    <button class="ml-[3px] w-40 h-[22px] pl-1 flex items-center gap-1 border border-[#404040] border-r-white border-b-white bg-[repeating-conic-gradient(#fff_0_25%,#d4d0c8_0_50%)] bg-[length:2px_2px]">
      <svg class="size-4" viewBox="0 0 16 16"><path d="M8 1l3 2 4 4-1 4-5 4-4-1-4-5 1-4 3-1z" fill="#f0a818" /><path d="M7 2l3 2 3 3-2 3-4 0-4-3 1-3z" fill="#ffd860" /><path d="M2 9l5 4 6-3" fill="none" stroke="#b87010" /></svg>住院收费管理系统
    </button>
    <button class="ml-[3px] w-40 h-[22px] pl-1 flex items-center gap-1 border border-white border-r-[#404040] border-b-[#404040] shadow-[inset_-1px_-1px_0_#808080]">
      <svg class="size-4" viewBox="0 0 16 16"><path d="M4 7h8l-1 8H5z" fill="#90b0a0" stroke="#506050" /><path d="M6 9L3 1" stroke="#c03020" stroke-width="2" /><path d="M8 9V1" stroke="#d0a030" stroke-width="2" /><path d="M10 9l4-7" stroke="#305090" stroke-width="2" /><path d="M9 11l3-4" stroke="#e05020" stroke-width="2" /></svg>清单有自费.JPG － 画图
    </button>
    <span class="ml-auto w-px h-5 bg-[#808080] shadow-[1px_0_0_#fff]"></span>
    <button aria-label="输入法" class="ml-[6px]"><svg class="size-4" viewBox="0 0 16 16"><path d="M1.500 6.500h13v8h-13z" fill="#fff" stroke="#000" /><path d="M3 8.500h10M3 10.500h10" stroke="#000" stroke-dasharray="1 1" /><path d="M4 12.500h8M5 6V4h2V3h3V1" fill="none" stroke="#000" /></svg></button>
    <span class="w-px h-6 ml-[10px] bg-white"></span>
    <div class="ml-1 w-[75px] h-[22px] flex items-center pl-1 gap-[5px] border border-[#808080] border-r-white border-b-white">
      <svg class="w-2 h-[5px]" viewBox="0 0 8 5"><path d="M3.500 0L1 2.500 3.500 5M7.500 0L5 2.500 7.500 5" fill="none" stroke="#000" stroke-width="1.500" /></svg>
      <svg class="size-4" viewBox="0 0 16 16"><rect width="16" height="16" rx="3" fill="#1878e0" /><path d="M0 4.500h16M0 8.500h16M0 12.500h16M8 0v5M4 4v5M12 4v5M8 8v5" stroke="#70c0ff" /></svg>
      <span>15:28</span>
    </div>
  </div>

  <script>
    const bills = [
      ['20090529', '3131.65', '20090429'],
      ['20090429', '7047.68', '20090326'],
      ['20090624', '2591.61', '20090529'],
    ];
    const marker = '<svg class="w-[6px] h-[11px] mx-auto" viewBox="0 0 6 11"><path d="M0 0l6 5.500L0 11z" /></svg>';

    document.getElementById('bills').innerHTML = bills.map((b, i) => {
      const active = i === bills.length - 1;
      return `
        <tr class="h-[19px]">
          <td class="p-0 bg-[#d4d0c8] border-r border-b border-black shadow-[inset_1px_1px_0_#fff]">${active ? marker : ''}</td>
          <td class="p-0 pl-[2px] border-r border-b border-[#c0c0c0]">${b[0]}</td>
          <td class="p-0 px-[2px] border-r border-b border-[#c0c0c0]"><div class="flex justify-between w-[43px]"><span>陈</span><span>梅</span></div></td>
          <td class="p-0 pr-[3px] text-right border-r border-b border-[#c0c0c0] ${active ? 'bg-[#0a246a] text-white outline-1 outline-dotted outline-[#c8a050] -outline-offset-1' : ''}">${b[1]}</td>
          <td class="p-0 pl-[2px] border-b border-[#c0c0c0]">${b[2]}</td>
        </tr>`;
    }).join('');

    document.getElementById('patients').innerHTML = ['', '5', '', '', '', '', '09'].map((v, i) => `
      <tr class="h-[19px]">
        <td class="p-0 bg-[#d4d0c8] border-r border-b border-black shadow-[inset_1px_1px_0_#fff]">${i === 6 ? marker : ''}</td>
        <td class="p-0 pl-px border-b border-[#c0c0c0]">070065</td>
        <td class="p-0 text-right border-b border-[#c0c0c0]">${v}</td>
      </tr>`).join('');
  </script>
</body>
</html>
